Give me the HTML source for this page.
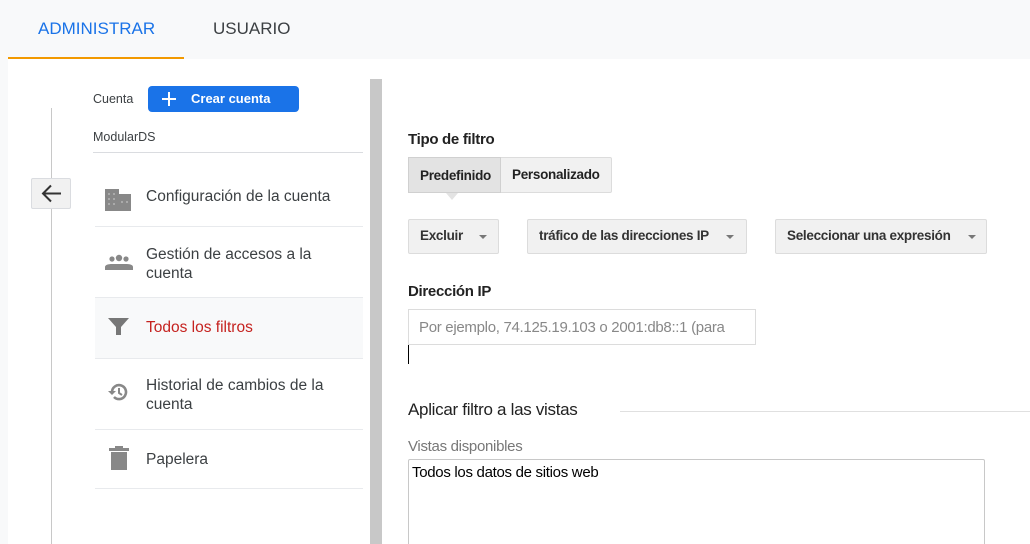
<!DOCTYPE html>
<html><head><meta charset="utf-8"><style>
*{margin:0;padding:0;box-sizing:border-box}
html{overflow:hidden;height:544px}
body{width:1030px;height:544px;overflow:hidden;background:#f8f9fa;font-family:"Liberation Sans",Arial,sans-serif;position:relative;color:#3c4043}
.a{position:absolute;white-space:nowrap}
.sel{position:absolute;height:35px;background:#f1f1f1;border:1px solid #dcdcdc;border-radius:2px;font-weight:bold;font-size:13.5px;color:#333;padding:8px 0 0 11px;letter-spacing:-0.3px}
.tri{position:absolute;top:15px;width:0;height:0;border-left:4px solid transparent;border-right:4px solid transparent;border-top:4px solid #777}
.item{position:absolute;left:95px;width:268px;border-bottom:1px solid #e8eaed;font-size:15.5px;color:#3c4043}
</style></head><body>
<div class="a" style="left:38px;top:19px;font-size:17px;color:#1a73e8">ADMINISTRAR</div>
<div class="a" style="left:213px;top:19px;font-size:17px;color:#3c4043">USUARIO</div>
<div class="a" style="left:8px;top:57px;width:176px;height:2px;background:#f29900"></div>
<div class="a" style="left:8px;top:59px;width:1022px;height:485px;background:#fff"></div>
<div class="a" style="left:370px;top:79px;width:12px;height:465px;background:#c8c8c8"></div>
<div class="a" style="left:51px;top:108px;width:1px;height:436px;background:#c8c8c8"></div>
<div class="a" style="left:31px;top:178px;width:40px;height:31px;background:#f1f1f1;border:1px solid #dadce0;border-radius:2px">
<svg width="38" height="29" viewBox="0 0 38 29"><path d="M29 14.5H11M19 6.5l-8 8 8 8" stroke="#333" stroke-width="2" fill="none"/></svg></div>
<div class="a" style="left:93px;top:92px;font-size:12.5px">Cuenta</div>
<div class="a" style="left:148px;top:86px;width:151px;height:26px;background:#1a73e8;border-radius:4px;color:#fff;font-weight:bold;font-size:13px;padding:5px 0 0 43px">Crear cuenta
<svg class="a" style="left:12px;top:4px" width="18" height="18"><path d="M9 2v14M2 9h14" stroke="#fff" stroke-width="2"/></svg></div>
<div class="a" style="left:93px;top:130px;font-size:12.5px">ModularDS</div>
<div class="a" style="left:93px;top:152px;width:270px;height:1px;background:#dadce0"></div>
<div class="item" style="top:166px;height:61px"><span class="a" style="left:51px;top:22px">Configuración de la cuenta</span>
<svg class="a" style="left:9px;top:21px" width="28" height="25"><path d="M1 2h14v5h12v17H1z" fill="#888"/><g fill="#aaa"><rect x="4" y="6" width="2" height="2"/><rect x="9" y="6" width="2" height="2"/><rect x="4" y="11" width="2" height="2"/><rect x="9" y="11" width="2" height="2"/><rect x="4" y="16" width="2" height="2"/><rect x="9" y="16" width="2" height="2"/><rect x="17" y="14" width="2" height="2"/><rect x="22" y="14" width="2" height="2"/></g></svg></div>
<div class="item" style="top:227px;height:71px"><span class="a" style="left:51px;top:18px;line-height:19px">Gestión de accesos a la<br>cuenta</span>
<svg class="a" style="left:9px;top:27px" width="30" height="20"><circle cx="8" cy="5" r="2.6" fill="#888"/><circle cx="15" cy="4" r="3.2" fill="#888"/><circle cx="22" cy="5" r="2.6" fill="#888"/><path d="M1 16v-3c0-2 3-3 7-3h14c4 0 7 1 7 3v3z" fill="#888"/></svg></div>
<div class="item" style="top:298px;height:61px;background:#f8f9fa"><span class="a" style="left:51px;top:21px;color:#c5221f">Todos los filtros</span>
<svg class="a" style="left:12px;top:18px" width="24" height="22"><path d="M1 2h21l-8 9v8h-5v-8z" fill="#777"/></svg></div>
<div class="item" style="top:359px;height:71px"><span class="a" style="left:51px;top:17px;line-height:19px">Historial de cambios de la<br>cuenta</span>
<svg class="a" style="left:13px;top:22px" width="22" height="22"><path d="M4 11a7 7 0 1 1 2 5" stroke="#888" stroke-width="2.6" fill="none"/><path d="M0 10h8l-4 4z" fill="#888"/><path d="M11 7v5l3 2" stroke="#888" stroke-width="2" fill="none"/></svg></div>
<div class="item" style="top:430px;height:59px"><span class="a" style="left:51px;top:21px">Papelera</span>
<svg class="a" style="left:13px;top:15px" width="22" height="27"><path d="M1 3h20v3H1z M7 1h8v2H7z" fill="#888"/><rect x="3" y="7" width="16" height="18" fill="#888"/></svg></div>
<div class="a" style="left:408px;top:131px;font-size:15px;font-weight:bold;color:#222;letter-spacing:-0.3px">Tipo de filtro</div>
<div class="a" style="left:408px;top:157px;width:204px;height:36px;border:1px solid #dcdcdc;background:#f1f1f1;border-radius:2px"></div>
<div class="a" style="left:408px;top:157px;width:93px;height:36px;background:#e3e3e3;border:1px solid #d0d0d0;font-weight:bold;font-size:13.5px;color:#222;padding:10px 0 0 11px;letter-spacing:-0.3px">Predefinido</div>
<div class="a" style="left:446px;top:193px;width:0;height:0;border-left:6px solid transparent;border-right:6px solid transparent;border-top:7px solid #e3e3e3"></div>
<div class="a" style="left:512px;top:167px;font-weight:bold;font-size:13.5px;color:#222;letter-spacing:-0.3px">Personalizado</div>
<div class="sel" style="left:408px;top:219px;width:91px">Excluir<span class="tri" style="left:70px"></span></div>
<div class="sel" style="left:527px;top:219px;width:220px">tráfico de las direcciones IP<span class="tri" style="left:198px"></span></div>
<div class="sel" style="left:775px;top:219px;width:212px">Seleccionar una expresión<span class="tri" style="left:192px"></span></div>
<div class="a" style="left:408px;top:283px;font-size:15px;font-weight:bold;color:#222;letter-spacing:-0.3px">Dirección IP</div>
<div class="a" style="left:408px;top:309px;width:348px;height:36px;border:1px solid #dcdcdc;overflow:hidden;font-size:15px;color:#888;padding:9px 0 0 10px;letter-spacing:-0.3px">Por ejemplo, 74.125.19.103 o 2001:db8::1 (para</div>
<div class="a" style="left:408px;top:345px;width:1px;height:19px;background:#000"></div>
<div class="a" style="left:408px;top:400px;font-size:17px;color:#222;letter-spacing:-0.3px">Aplicar filtro a las vistas</div>
<div class="a" style="left:620px;top:411px;width:410px;height:1px;background:#e0e0e0"></div>
<div class="a" style="left:408px;top:438px;font-size:15px;color:#777;letter-spacing:-0.3px">Vistas disponibles</div>
<div class="a" style="left:408px;top:459px;width:577px;height:90px;border:1px solid #c8c8c8;border-radius:2px;font-size:15px;color:#000;padding:4px 0 0 3px;letter-spacing:-0.3px">Todos los datos de sitios web</div>
</body></html>
